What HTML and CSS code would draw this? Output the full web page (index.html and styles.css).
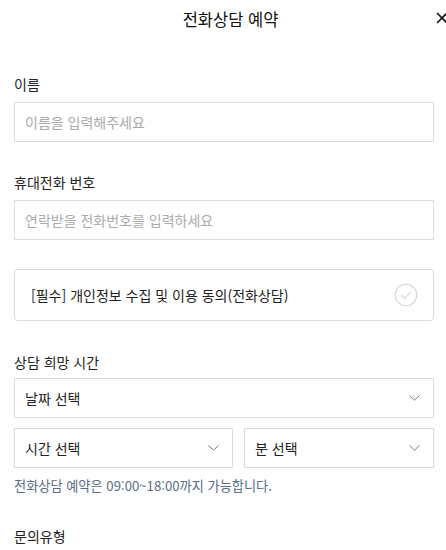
FILE: index.html
```html
<!DOCTYPE html>
<html lang="ko">
<head>
<meta charset="utf-8">
<title>전화상담 예약</title>
<link rel="stylesheet" href="styles.css">
</head>
<body>
<div class="modal">
  <header class="header">
    <h1 class="title">전화상담 예약</h1>
    <button class="close" type="button" aria-label="닫기">
      <svg width="12" height="12" viewBox="0 0 12 12"><path d="M1 1L11 11M11 1L1 11" stroke="#111" stroke-width="1.6" fill="none"/></svg>
    </button>
  </header>
  <div class="body">
    <div class="field first">
      <label class="label">이름</label>
      <input class="input" type="text" placeholder="이름을 입력해주세요">
    </div>
    <div class="field">
      <label class="label">휴대전화 번호</label>
      <input class="input" type="text" placeholder="연락받을 전화번호를 입력하세요">
    </div>
    <div class="consent">
      <span class="consent-text">[필수] 개인정보 수집 및 이용 동의(전화상담)</span>
      <svg class="check" width="24" height="24" viewBox="0 0 24 24"><circle cx="12" cy="12" r="10.8" stroke="#d4d4d4" stroke-width="1.1" fill="none"/><path d="M7.3 12.2L10.6 15.3L16.6 9.2" stroke="#d0d0d0" stroke-width="1.1" fill="none"/></svg>
    </div>
    <div class="field time">
      <label class="label">상담 희망 시간</label>
      <div class="select full"><span>날짜 선택</span><svg class="chev" width="11" height="6" viewBox="0 0 11 6"><path d="M0.5 0.5L5.5 5.2L10.5 0.5" stroke="#777" stroke-width="1" fill="none"/></svg></div>
      <div class="row">
        <div class="select hour"><span>시간 선택</span><svg class="chev" width="11" height="6" viewBox="0 0 11 6"><path d="M0.5 0.5L5.5 5.2L10.5 0.5" stroke="#777" stroke-width="1" fill="none"/></svg></div>
        <div class="select min"><span>분 선택</span><svg class="chev" width="11" height="6" viewBox="0 0 11 6"><path d="M0.5 0.5L5.5 5.2L10.5 0.5" stroke="#777" stroke-width="1" fill="none"/></svg></div>
      </div>
      <p class="hint">전화상담 예약은 09:00~18:00까지 가능합니다.</p>
    </div>
    <div class="field">
      <label class="label">문의유형</label>
    </div>
  </div>
</div>
</body>
</html>
```
FILE: styles.css
```css
* { box-sizing: border-box; }
html, body { margin: 0; padding: 0; background: #fff; overflow: hidden; }
body {
  font-family: "Noto Sans CJK KR", "Noto Sans", sans-serif;
  color: #222;
  width: 446px;
}
.modal { width: 446px; }
.header {
  position: relative;
  height: 37px;
  display: flex;
  align-items: center;
  justify-content: center;
}
.title {
  margin: 0;
  font-size: 16.5px;
  font-weight: 400;
  color: #111;
  line-height: 20px;
  padding-left: 15px;
}
.close {
  position: absolute;
  left: 436px;
  top: 12px;
  width: 12px;
  height: 12px;
  padding: 0;
  border: 0;
  background: none;
  display: block;
}
.close svg { display: block; }
.body { padding: 0 12px 0 14px; }
.field { display: flex; flex-direction: column; margin-top: 30px; }
.field.first { margin-top: 37px; }
.label {
  font-size: 14px;
  line-height: 20px;
  color: #222;
  margin-bottom: 8px;
}
.input {
  height: 40px;
  border: 1px solid #dcdcdc;
  border-radius: 0;
  padding: 0 10px;
  font-family: inherit;
  font-size: 14px;
  color: #222;
  outline: none;
  background: #fff;
}
.input::placeholder { color: #ababab; }
.consent {
  margin-top: 29px;
  height: 52px;
  border: 1px solid #dcdcdc;
  border-radius: 4px;
  display: flex;
  align-items: center;
  justify-content: space-between;
  padding: 0 15px 0 16px;
}
.consent-text { font-size: 14px; color: #222; line-height: 20px; }
.check { display: block; }
.field.time { margin-top: 31px; }
.field.time .label { margin-bottom: 6px; }
.select {
  height: 40px;
  border: 1px solid #dcdcdc;
  display: flex;
  align-items: center;
  justify-content: space-between;
  padding: 0 13px 0 10px;
  font-size: 14px;
  color: #222;
}
.select span { line-height: 20px; }
.chev { display: block; }
.row { display: flex; gap: 11px; margin-top: 10px; }
.hour { width: 219px; }
.min { flex: 1; }
.hint {
  margin: 8px 0 0;
  font-size: 13.2px;
  line-height: 20px;
  color: #5a6b85;
}
```
